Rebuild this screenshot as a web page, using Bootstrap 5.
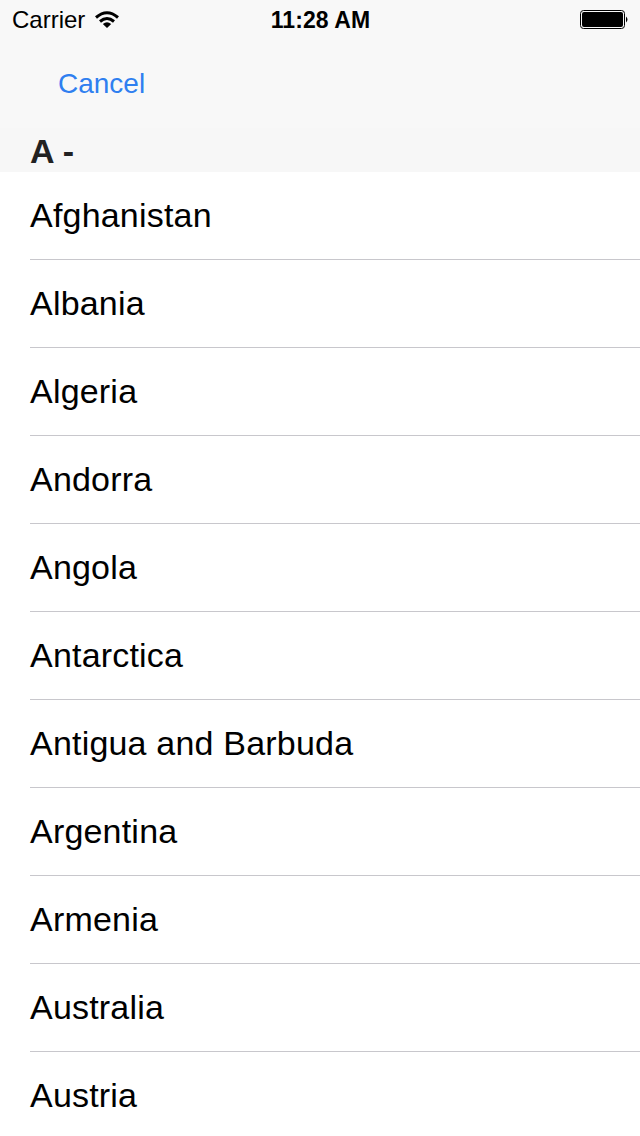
<!DOCTYPE html>
<html lang="en">
<head>
<meta charset="utf-8">
<meta name="viewport" content="width=device-width, initial-scale=1">
<title>Countries</title>
<link href="https://cdn.jsdelivr.net/npm/bootstrap@5.3.0/dist/css/bootstrap.min.css" rel="stylesheet">
<style>
body { font-family: "Liberation Sans", Arial, sans-serif; color: #000; background: #fff; overflow: hidden; }
.phone { width: 640px; height: 1136px; }
.topbar { background: #f8f8f8; height: 128px; }
.status { height: 40px; padding: 0 11px 0 12px; font-size: 24px; line-height: 40px; }
.status > * { flex: 1 1 0; }
.clock { font-size: 23px; letter-spacing: .1px; }
.cancel { color: #2f7ff0; font-size: 28px; line-height: 40px; margin: 24px 0 0 58px; }
.section-title { background: #f7f7f7; color: #222; height: 44px; font-size: 34px; line-height: 46px; padding-left: 30px; }
.countries { padding-left: 30px; }
.country { height: 88px; line-height: 87px; font-size: 34px; border-bottom: 1px solid #c8c7cc; letter-spacing: .2px; }
</style>
</head>
<body>
<div class="phone overflow-hidden">
  <header class="topbar">
    <div class="status d-flex align-items-center">
      <div class="d-flex align-items-center"><span class="carrier">Carrier</span>
        <svg class="ms-2" width="28" height="20" viewBox="0 0 28 20" fill="none" stroke="#000" stroke-width="3"><path d="M3 7.500Q14-2 25 7.500M7 11.500Q14 5.500 21 11.500"/><path d="M9.800 14Q14 10.500 18.200 14L14 18Z" fill="#000" stroke="none"/></svg>
      </div>
      <div class="clock fw-bold text-center">11:28 AM</div>
      <div class="d-flex justify-content-end">
        <svg width="49" height="20" viewBox="0 0 49 20"><rect x=".5" y=".5" width="44" height="18" rx="3" fill="none" stroke="#000"/><rect x="2" y="2" width="41" height="15" rx="2"/><path d="M46 6.500q3 3 0 6z"/></svg>
      </div>
    </div>
    <a class="cancel d-inline-block text-decoration-none" href="#">Cancel</a>
  </header>
  <h2 class="section-title m-0 fw-bold">A -</h2>
  <ul class="countries list-unstyled m-0">
    <li class="country">Afghanistan</li>
    <li class="country">Albania</li>
    <li class="country">Algeria</li>
    <li class="country">Andorra</li>
    <li class="country">Angola</li>
    <li class="country">Antarctica</li>
    <li class="country">Antigua and Barbuda</li>
    <li class="country">Argentina</li>
    <li class="country">Armenia</li>
    <li class="country">Australia</li>
    <li class="country">Austria</li>
  </ul>
</div>
<script src="https://cdn.jsdelivr.net/npm/bootstrap@5.3.0/dist/js/bootstrap.bundle.min.js"></script>
</body>
</html>
